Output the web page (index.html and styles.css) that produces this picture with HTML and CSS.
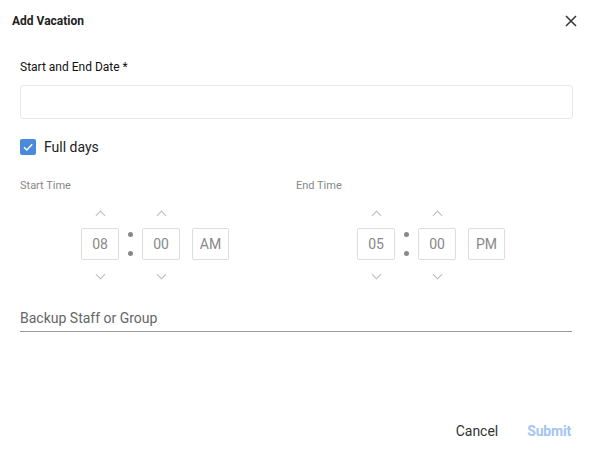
FILE: index.html
```html
<!DOCTYPE html>
<html lang="en">
<head>
    <meta charset="UTF-8">
    <meta name="viewport" content="width=device-width, initial-scale=1.0">
    <title>Add Vacation</title>
    <link rel="stylesheet" href="styles.css">
</head>
<body>
    <div class="dialog">
        <div class="dialog-header">
            <h1>Add Vacation</h1>
            <button class="close-btn" aria-label="Close">
                <svg width="12" height="12" viewBox="0 0 12 12">
                    <path d="M1 1L11 11M11 1L1 11" stroke="#333" stroke-width="1.5" fill="none"/>
                </svg>
            </button>
        </div>

        <div class="dialog-body">
            <label class="field-label">Start and End Date *</label>
            <div class="date-input"></div>

            <label class="checkbox-row">
                <span class="checkbox">
                    <svg width="12" height="12" viewBox="0 0 12 12">
                        <path d="M2 6.2L4.8 9L10.2 3.2" stroke="#fff" stroke-width="1.4" fill="none"/>
                    </svg>
                </span>
                Full days
            </label>

            <div class="time-row">
                <div class="time-col">
                    <div class="time-label">Start Time</div>
                    <div class="picker">
                        <div class="spin">
                            <span class="chev up"></span>
                            <div class="time-box">08</div>
                            <span class="chev down"></span>
                        </div>
                        <div class="sep"><i></i><i></i></div>
                        <div class="spin">
                            <span class="chev up"></span>
                            <div class="time-box">00</div>
                            <span class="chev down"></span>
                        </div>
                        <div class="time-box ampm">AM</div>
                    </div>
                </div>
                <div class="time-col">
                    <div class="time-label">End Time</div>
                    <div class="picker">
                        <div class="spin">
                            <span class="chev up"></span>
                            <div class="time-box">05</div>
                            <span class="chev down"></span>
                        </div>
                        <div class="sep"><i></i><i></i></div>
                        <div class="spin">
                            <span class="chev up"></span>
                            <div class="time-box">00</div>
                            <span class="chev down"></span>
                        </div>
                        <div class="time-box ampm">PM</div>
                    </div>
                </div>
            </div>

            <div class="backup-field">Backup Staff or Group</div>
        </div>

        <div class="dialog-actions">
            <button class="btn-cancel">Cancel</button>
            <button class="btn-submit">Submit</button>
        </div>
    </div>
</body>
</html>
```

FILE: styles.css
```css
* {
    box-sizing: border-box;
}

body {
    margin: 0;
    font-family: Roboto, "Liberation Sans", sans-serif;
    background-color: #fff;
    color: #333;
}

.dialog {
    width: 592px;
    height: 459px;
    display: flex;
    flex-direction: column;
}

.dialog-header {
    display: flex;
    justify-content: space-between;
    align-items: center;
    padding: 13px 15px 0 12px;
    height: 28px;
}

.dialog-header h1 {
    margin: 0;
    font-size: 12px;
    font-weight: 700;
    color: #222;
}

.close-btn {
    background: none;
    border: none;
    padding: 0;
    width: 12px;
    height: 12px;
    display: flex;
    cursor: pointer;
}

.dialog-body {
    padding: 32px 19px 0 20px;
}

.field-label {
    display: block;
    font-size: 12px;
    font-weight: 400;
    color: #111;
    line-height: 14px;
}

.date-input {
    margin-top: 11px;
    height: 34px;
    border: 1px solid #e8e8e8;
    border-radius: 3px;
}

.checkbox-row {
    display: flex;
    align-items: center;
    gap: 8px;
    margin-top: 20px;
    font-size: 14px;
    color: #222;
}

.checkbox {
    width: 16px;
    height: 16px;
    border-radius: 2px;
    background-color: #4a89dc;
    display: flex;
    align-items: center;
    justify-content: center;
}

.time-row {
    display: grid;
    grid-template-columns: 1fr 1fr;
    margin-top: 24px;
    margin-right: 1px;
}

.time-label {
    font-size: 11px;
    color: #888;
    line-height: 13px;
}

.picker {
    display: flex;
    align-items: center;
    padding-left: 61px;
    margin-top: 13px;
}

.spin {
    display: flex;
    flex-direction: column;
    align-items: center;
}

.chev {
    width: 7px;
    height: 7px;
    border-left: 1px solid #bbb;
    border-top: 1px solid #bbb;
}

.chev.up {
    transform: rotate(45deg);
    margin: 7px 0 9px;
}

.chev.down {
    transform: rotate(225deg);
    margin: 11px 0 4px;
}

.time-box {
    width: 38px;
    height: 32px;
    border: 1px solid #ddd;
    border-radius: 2px;
    display: flex;
    align-items: center;
    justify-content: center;
    font-size: 14px;
    color: #888;
}

.time-box.ampm {
    width: 37px;
    margin-left: 12px;
}

.sep {
    width: 23px;
    height: 32px;
    display: flex;
    flex-direction: column;
    justify-content: space-between;
    align-items: center;
    padding: 4px 0;
}

.sep i {
    width: 5px;
    height: 5px;
    border-radius: 50%;
    background-color: #888;
}

.backup-field {
    margin-top: 28px;
    padding-bottom: 5px;
    font-size: 14px;
    color: #666;
    border-bottom: 1px solid #999;
    margin-right: 1px;
}

.dialog-actions {
    margin-top: auto;
    display: flex;
    justify-content: flex-end;
    gap: 29px;
    padding: 0 21px 20px 0;
}

.dialog-actions button {
    background: none;
    border: none;
    padding: 0;
    font-family: Roboto, "Liberation Sans", sans-serif;
    font-size: 14px;
    cursor: pointer;
}

.btn-cancel {
    color: #333;
}

.btn-submit {
    color: #a3c5f0;
    font-weight: 700;
    letter-spacing: -0.2px;
}
```
